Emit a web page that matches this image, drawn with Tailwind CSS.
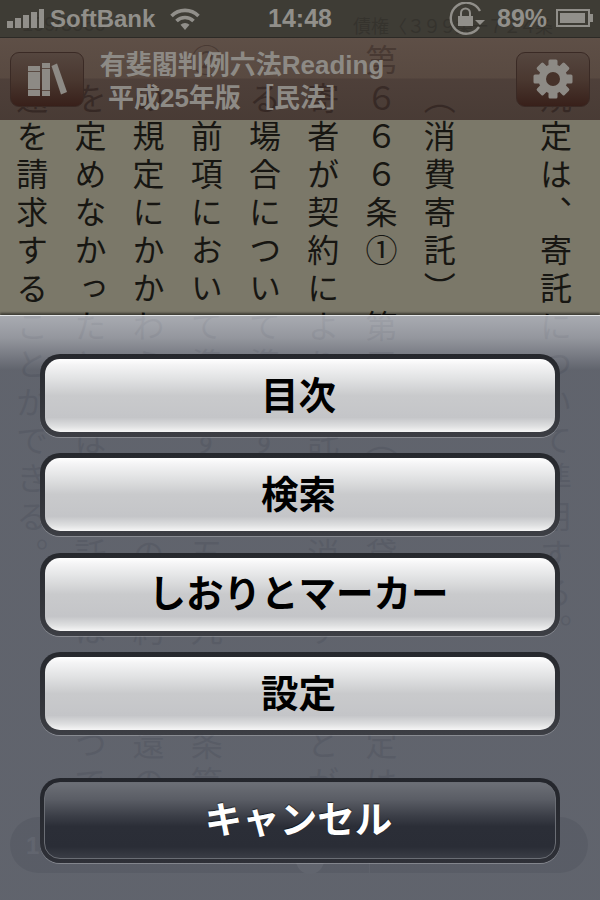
<!DOCTYPE html>
<html lang="ja">
<head>
  <meta charset="UTF-8">
  <title>有斐閣判例六法Reading</title>
  <script src="https://cdn.jsdelivr.net/npm/@tailwindcss/browser@4"></script>
</head>
<body class="bg-black">
  <div class="relative w-[600px] h-[900px] overflow-hidden bg-[#7b7869] font-['Liberation_Sans','Noto_Sans_CJK_JP',sans-serif]">

    <!-- Page behind the menu: vertical text -->
    <div class="absolute top-[13px] left-[353px] text-[18px] leading-[24px] text-[#1f1e1a] whitespace-nowrap font-['Noto_Sans_CJK_JP',sans-serif]">債権〈<span class="tracking-[-2px]">３９９条ー７２４</span>条</div>
    <div class="absolute top-[12px] left-[22px] text-[20px] leading-[24px] text-[#1f1e1a] whitespace-nowrap">109/3066</div>
    <div class="[writing-mode:vertical-rl] [text-spacing-trim:space-all] h-[900px] pt-[44px] ml-[3px] text-[32px] leading-[58.2px] tracking-[6px] text-[#171612] font-['Noto_Sans_CJK_JP',sans-serif]">
      <p>　規定は、寄託について準用する。</p>
      <p>　</p>
      <p>　（消費寄託）</p>
      <p>第６６６条①　第五節（消費貸借）の規定は、</p>
      <p>　寄者が契約により寄託物を消費することがで</p>
      <p>　る場合について準用する。</p>
      <p>②　前項において準用する第五百九十一条第一</p>
      <p>　の規定にかかわらず、前項の契約に返還の時</p>
      <p>　を定めなかったときは、寄託者は、いつでも</p>
      <p>　還を請求することができる。</p>
    </div>

    <!-- Page slider, seen through the sheet -->
    <div class="absolute left-[10px] top-[817px] w-[578px] h-[56px] rounded-full bg-[#1e1c14]/95"></div>
    <div class="absolute left-[26px] top-[832px] text-[24px] leading-[28px] font-bold text-[#8b8a84]">1</div>
    <div class="absolute left-[296px] top-[846px] w-[28px] h-[28px] rounded-full bg-[#8a887c]"></div>
    <div class="absolute left-[369px] top-[860px] w-px h-[13px] bg-[#5f5d52]"></div>

    <!-- Top bars -->
    <div class="absolute inset-x-0 top-0">
      <!-- Status bar -->
      <div class="relative flex items-center h-[38px] bg-[#373530]/90 border-b border-[#2c2a26] text-[#918f8a] font-bold">
        <svg class="ml-[7px] w-[37px] h-[19px]" viewBox="0 0 37 19" fill="currentColor">
          <rect x="0" y="12" width="6" height="7"/><rect x="8" y="9" width="6" height="10"/><rect x="16" y="6" width="6" height="13"/><rect x="24" y="3" width="6" height="16"/><rect x="32" y="0" width="5" height="19"/>
        </svg>
        <span class="ml-[6px] text-[24px] leading-[28px]">SoftBank</span>
        <svg class="ml-[15px] w-[30px] h-[22px]" viewBox="0 0 30 22" fill="none" stroke="currentColor" stroke-width="3.6">
          <path d="M1.5 8 A19 19 0 0 1 28.500 8"/><path d="M6.500 13 A12 12 0 0 1 23.500 13"/>
          <path d="M15 22 L10.500 16.800 A6.500 6.500 0 0 1 19.500 16.800 Z" fill="currentColor" stroke="none"/>
        </svg>
        <span class="absolute left-[268px] top-[4px] text-[25px] leading-[29px]">14:48</span>
        <svg class="absolute left-[449px] top-[2px] w-[36px] h-[34px]" viewBox="0 0 36 34" fill="none" stroke="currentColor">
          <path d="M30 25 A15.500 15.500 0 1 1 31 9" stroke-width="2.400"/>
          <path d="M26 18 L36 18 L31 23 Z" fill="currentColor" stroke="none"/>
          <rect x="9" y="14" width="15" height="10" fill="currentColor" stroke="none"/>
          <path d="M12 14 V11 A4.500 4.500 0 0 1 21 11 V14" stroke-width="2"/>
        </svg>
        <span class="absolute left-[497px] top-[4px] text-[25px] leading-[29px]">89%</span>
        <div class="absolute left-[556px] top-[9px] w-[34px] h-[18px] border-2 border-[#918f8a] p-[2px]">
          <div class="w-[25px] h-full bg-[#918f8a]"></div>
        </div>
        <div class="absolute left-[590px] top-[14px] w-[3px] h-[8px] bg-[#918f8a]"></div>
      </div>

      <!-- Title bar -->
      <div class="flex items-center h-[82px] bg-[linear-gradient(180deg,rgba(87,69,62,0.8)_0px,rgba(80,62,55,0.8)_40px,rgba(67,50,46,0.8)_41px,rgba(60,44,40,0.8)_82px)] text-[#8d8a85]">
        <button class="flex items-center justify-center ml-[10px] w-[74px] h-[55px] rounded-[9px] border border-[#3a2a25] bg-[linear-gradient(180deg,#55463f_0%,#4a3830_50%,#38201a_100%)]">
          <svg class="w-[40px] h-[36px]" viewBox="0 0 40 36" fill="currentColor">
            <path d="M1 5 H13 V35 H1 Z"/>
            <path d="M15 2 H23 V35 H15 Z"/>
            <path d="M24.500 5 L30 2.500 L40 31 L34 33.500 Z"/>
            <path d="M1 10 H13 V11 H1 Z M1 28 H13 V29 H1 Z M15 7 H23 V8 H15 Z M15 29 H23 V30 H15 Z" fill="#5a4a42"/>
          </svg>
        </button>
        <div class="w-[316px] pt-[5px] text-center font-bold text-[26px] leading-[33px] whitespace-nowrap font-['Liberation_Sans','Noto_Sans_CJK_JP',sans-serif]">
          <p>有斐閣判例六法Reading</p>
          <p class="pr-[24px]">平成25年版 ［民法］</p>
        </div>
        <button class="flex items-center justify-center ml-auto mr-[10px] w-[74px] h-[55px] rounded-[9px] border border-[#3a2a25] bg-[linear-gradient(180deg,#55463f_0%,#4a3830_50%,#38201a_100%)]">
          <svg class="w-[40px] h-[40px]" viewBox="-20 -20 40 40">
            <g fill="currentColor">
              <circle r="14.500"/>
              <rect x="-4.500" y="-19.500" width="9" height="39" rx="1.500"/>
              <rect x="-4.500" y="-19.500" width="9" height="39" rx="1.500" transform="rotate(45)"/>
              <rect x="-4.500" y="-19.500" width="9" height="39" rx="1.500" transform="rotate(90)"/>
              <rect x="-4.500" y="-19.500" width="9" height="39" rx="1.500" transform="rotate(135)"/>
            </g>
            <circle r="7" fill="#46322a"/>
          </svg>
        </button>
      </div>
    </div>

    <!-- Action sheet -->
    <div class="absolute inset-x-0 top-[315px] bottom-0 flex flex-col px-[40px] pt-[38px] border-t border-[#e4e6e8] shadow-[0_-2px_2px_rgba(0,0,0,0.5)] bg-[linear-gradient(180deg,rgba(172,175,183,0.92)_0px,rgba(150,153,162,0.92)_22px,rgba(94,98,109,0.92)_54px,rgba(94,98,109,0.92)_100%)] font-['Noto_Sans_CJK_JP',sans-serif]">
      <div class="flex flex-col gap-[16.400px]">
        <div class="h-[83px] p-[5px] rounded-[20px] bg-[linear-gradient(180deg,#26282d,#3c3e44)] shadow-[0_1px_0_rgba(255,255,255,0.25)]">
          <button class="flex items-center justify-center w-full h-full pb-[6px] pr-[3px] rounded-[15px] bg-[linear-gradient(180deg,#ffffff_0%,#f4f4f5_8%,#e3e4e5_25%,#c9cacc_50%,#c4c5c8_80%,#dedfe0_92%,#f6f6f6_100%)] text-[37.500px] leading-[44px] font-bold text-black">目次</button>
        </div>
        <div class="h-[83px] p-[5px] rounded-[20px] bg-[linear-gradient(180deg,#26282d,#3c3e44)] shadow-[0_1px_0_rgba(255,255,255,0.25)]">
          <button class="flex items-center justify-center w-full h-full pb-[6px] pr-[3px] rounded-[15px] bg-[linear-gradient(180deg,#ffffff_0%,#f4f4f5_8%,#e3e4e5_25%,#c9cacc_50%,#c4c5c8_80%,#dedfe0_92%,#f6f6f6_100%)] text-[37.500px] leading-[44px] font-bold text-black">検索</button>
        </div>
        <div class="h-[83px] p-[5px] rounded-[20px] bg-[linear-gradient(180deg,#26282d,#3c3e44)] shadow-[0_1px_0_rgba(255,255,255,0.25)]">
          <button class="flex items-center justify-center w-full h-full pb-[6px] pr-[3px] rounded-[15px] bg-[linear-gradient(180deg,#ffffff_0%,#f4f4f5_8%,#e3e4e5_25%,#c9cacc_50%,#c4c5c8_80%,#dedfe0_92%,#f6f6f6_100%)] text-[37.500px] leading-[44px] font-bold text-black">しおりとマーカー</button>
        </div>
        <div class="h-[83px] p-[5px] rounded-[20px] bg-[linear-gradient(180deg,#26282d,#3c3e44)] shadow-[0_1px_0_rgba(255,255,255,0.25)]">
          <button class="flex items-center justify-center w-full h-full pb-[6px] pr-[3px] rounded-[15px] bg-[linear-gradient(180deg,#ffffff_0%,#f4f4f5_8%,#e3e4e5_25%,#c9cacc_50%,#c4c5c8_80%,#dedfe0_92%,#f6f6f6_100%)] text-[37.500px] leading-[44px] font-bold text-black">設定</button>
        </div>
      </div>
      <div class="mt-[43px] h-[85px] p-[4px] rounded-[20px] bg-[linear-gradient(180deg,#24262c,#2e3037)] shadow-[0_1px_0_rgba(255,255,255,0.25)]">
        <button class="flex items-center justify-center w-full h-full pb-[8px] pr-[3px] rounded-[16px] border border-[#6a6d74] bg-[linear-gradient(180deg,#6c6f76_0%,#5a5d65_22%,#3a3d46_45%,#2b2e37_58%,#2a2d36_85%,#3a3d45_100%)] text-[37.500px] leading-[44px] font-bold text-white [text-shadow:0_-1px_1px_rgba(0,0,0,0.6)]">キャンセル</button>
      </div>
    </div>
  </div>
</body>
</html>
